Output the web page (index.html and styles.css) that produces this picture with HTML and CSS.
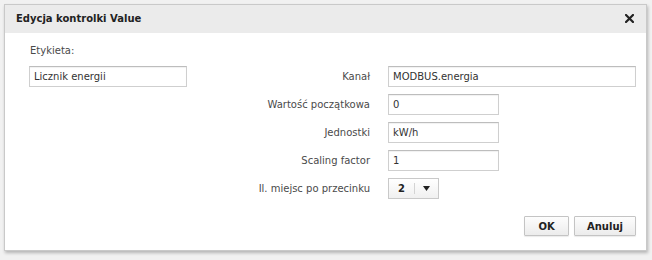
FILE: index.html
```html
<!DOCTYPE html>
<html lang="pl">
<head>
<meta charset="utf-8">
<title>Edycja kontrolki Value</title>
<link rel="stylesheet" href="styles.css">
</head>
<body>
<div class="dialog">
  <div class="header">
    <span class="title">Edycja kontrolki Value</span>
    <span class="close">
      <svg width="9" height="9" viewBox="0 0 9 9"><path d="M1 1 L8 8 M8 1 L1 8" stroke="#222" stroke-width="2.2" stroke-linecap="square"/></svg>
    </span>
  </div>
  <div class="body">
    <div class="form">
      <div class="etykieta-label">Etykieta:</div>
      <div class="field etykieta-input">Licznik energii</div>

      <div class="label r1">Kanał</div>
      <div class="field wide r1">MODBUS.energia</div>

      <div class="label r2">Wartość początkowa</div>
      <div class="field short r2">0</div>

      <div class="label r3">Jednostki</div>
      <div class="field short r3">kW/h</div>

      <div class="label r4">Scaling factor</div>
      <div class="field short r4">1</div>

      <div class="label r5">Il. miejsc po przecinku</div>
      <div class="select r5"><span class="sel-value">2</span><span class="sel-arrow"><svg width="7" height="5" viewBox="0 0 7 5"><path d="M0 0 H7 L3.5 5 Z" fill="#222"/></svg></span></div>
    </div>
    <div class="buttons">
      <button class="btn ok">OK</button>
      <button class="btn">Anuluj</button>
    </div>
  </div>
</div>
</body>
</html>
```
FILE: styles.css
```css
html, body {
  margin: 0;
  padding: 0;
  background: #f1f1f1;
  width: 652px;
  height: 260px;
  overflow: hidden;
}
body {
  font-family: "DejaVu Sans", Verdana, sans-serif;
  font-size: 10px;
  color: #4a4a4a;
  padding: 4px 5px 0 4px;
  box-sizing: border-box;
}
.dialog {
  background: #fff;
  border: 1px solid #c9c9c9;
  box-shadow: 1px 2px 3px rgba(0,0,0,0.25);
  height: 247px;
  box-sizing: border-box;
  display: flex;
  flex-direction: column;
}
.header {
  background: #ebebeb;
  height: 28px;
  display: flex;
  align-items: center;
  justify-content: space-between;
  padding: 0 12px 1px 11px;
  box-sizing: border-box;
}
.title {
  font-weight: bold;
  font-size: 10px;
  color: #222;
}
.close {
  display: flex;
  width: 9px;
  height: 9px;
}
.body {
  flex: 1;
  padding: 11px 10px 0 24px;
  display: flex;
  flex-direction: column;
}
.form {
  display: grid;
  grid-template-columns: 158px 1fr 248px;
  grid-template-rows: 22px repeat(5, 28px);
  column-gap: 17px;
  align-items: start;
}
.etykieta-label {
  grid-column: 1;
  grid-row: 1;
  padding-left: 1px;
  line-height: 14px;
}
.etykieta-input { grid-column: 1; grid-row: 2; }
.r1 { grid-row: 2; }
.r2 { grid-row: 3; }
.r3 { grid-row: 4; }
.r4 { grid-row: 5; }
.r5 { grid-row: 6; }
.label {
  grid-column: 2;
  text-align: right;
  line-height: 21px;
  white-space: nowrap;
  padding-right: 1px;
}
.field, .select {
  box-sizing: border-box;
  height: 21px;
  border: 1px solid #cfcfcf;
  border-top-color: #bdbdbd;
  background: #fff;
  padding: 0 4px;
  line-height: 19px;
  color: #333;
  box-shadow: inset 0 1px 1px rgba(0,0,0,0.06);
}
.wide { grid-column: 3; width: 248px; }
.short { grid-column: 3; width: 111px; }
.select {
  grid-column: 3;
  width: 51px;
  display: flex;
  padding: 0;
  background: linear-gradient(#fff, #f0f0f0);
  border-color: #c9c9c9;
  box-shadow: none;
}
.sel-value {
  width: 25px;
  text-align: center;
  font-weight: bold;
  color: #222;
}
.sel-arrow {
  flex: 1;
  display: flex;
  align-items: center;
  justify-content: center;
  border-left: 1px solid #d4d4d4;
  margin: 4px 0;
}
.buttons {
  display: flex;
  justify-content: flex-end;
  gap: 5px;
  margin-top: 10px;
}
.btn {
  font-family: "DejaVu Sans", Verdana, sans-serif;
  font-size: 10px;
  font-weight: bold;
  color: #222;
  height: 20px;
  padding: 0 9px;
  border: 1px solid #c4c4c4;
  background: linear-gradient(#fdfdfd, #ececec);
  border-radius: 1px;
  box-shadow: 0 1px 1px rgba(0,0,0,0.08);
}
.ok { width: 45px; }
.btn:not(.ok) { width: 62px; }
```
